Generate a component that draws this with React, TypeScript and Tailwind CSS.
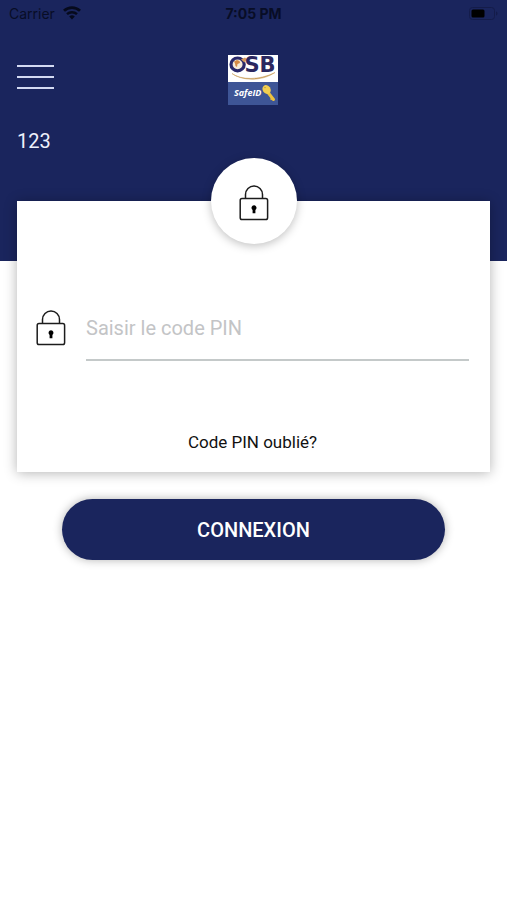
import React, { useState } from 'react';

const LockIcon = () => (
  <svg width="30" height="36" viewBox="0 0 30 36" fill="none" stroke="#1c1c1c" strokeWidth="1.5" aria-hidden="true">
    <path d="M6.5 13.5V9.5a8.5 8.5 0 0 1 17 0v4" />
    <rect x="1.2" y="13.6" width="27.4" height="21" rx="1.8" />
    <path
      d="M15 20.2a2.6 2.6 0 0 0-1.4 4.7v3.4h2.8v-3.4a2.6 2.6 0 0 0-1.4-4.7z"
      fill="#000"
      stroke="none"
    />
  </svg>
);

const WifiIcon = () => (
  <svg width="18" height="14" viewBox="0 0 18 14" fill="none" stroke="#060a1c" aria-label="Wi-Fi">
    <path d="M1 4.8a11.6 11.6 0 0 1 16 0" strokeWidth="2.8" />
    <path d="M4 8.2a7.2 7.2 0 0 1 10 0" strokeWidth="2.4" />
    <path d="M9 13.4 6.2 10.6a4 4 0 0 1 5.6 0z" fill="#060a1c" stroke="none" />
  </svg>
);

const BatteryIcon = () => (
  <svg width="29" height="13" viewBox="0 0 29 13" aria-label="Battery">
    <rect x=".5" y=".5" width="25" height="12" rx="3" fill="none" stroke="#141c4a" />
    <rect x="2.5" y="2.5" width="13" height="8" rx="1.5" fill="#000" />
    <path d="M27 4.5c2 .6 2 3.4 0 4z" fill="#141c4a" />
  </svg>
);

const Logo = () => (
  <svg width="50" height="50" viewBox="0 0 50 50" className="overflow-visible" role="img" aria-label="OSB SafeID">
    <rect width="50" height="50" fill="#fff" />
    <rect y="27" width="50" height="23" fill="#3e5596" />
    <ellipse cx="9.6" cy="9.4" rx="6.6" ry="6.4" fill="#f7ead9" stroke="#29286b" strokeWidth="3.2" />
    <path d="M6 6.5l3-1.5 2.5 1 .5 2-2.5 1-.5 3-1.5-1-.5-2.500z" fill="#d58a45" />
    <path d="M13 4.500l4-2 2 2-2.500 3z" fill="#d59a5c" />
    <text
      x="16.500"
      y="17"
      fill="#2b2860"
      fontFamily="'DejaVu Sans', sans-serif"
      fontWeight="700"
      fontSize="21"
    >
      SB
    </text>
    <path d="M4 18.500c9 6.500 27 7 43-1-14 9.500-34 8-43 1z" fill="#c79a55" stroke="#c79a55" strokeWidth=".5" />
    <text
      x="6"
      y="41"
      fill="#fff"
      fontFamily="'Open Sans', sans-serif"
      fontWeight="700"
      fontStyle="italic"
      fontSize="9"
    >
      SafeID
    </text>
    <path d="M40 37.500l5.500 7" stroke="#edc23e" strokeWidth="3" strokeLinecap="round" />
    <path d="M42.500 44.500l2.500-1.500" stroke="#edc23e" strokeWidth="1.8" />
    <ellipse cx="38.600" cy="34.500" rx="3.900" ry="4.700" transform="rotate(-35 38.600 34.500)" fill="#f3ce50" />
    <circle cx="37" cy="32.600" r=".7" fill="#a08d46" />
  </svg>
);

const StatusBar = () => (
  <div className="grid h-[26px] grid-cols-3 items-center px-[9px] font-['Inter',sans-serif] text-[14px] text-[#080d26]">
    <div className="flex items-center gap-2">
      <span>Carrier</span>
      <WifiIcon />
    </div>
    <span className="text-center font-bold">7:05 PM</span>
    <div className="flex justify-end">
      <BatteryIcon />
    </div>
  </div>
);

export default function App() {
  const [pin, setPin] = useState('');

  return (
    <div className="min-h-screen bg-white font-['Roboto',sans-serif]">
      <header className="bg-[#1a255d] pb-[108px]">
        <StatusBar />

        <div className="mt-[29px] grid grid-cols-3 items-start px-[17px]">
          <button type="button" aria-label="Menu" className="flex w-[37px] flex-col gap-[9px] py-2.5">
            <span className="h-[2px] w-full bg-[#d3daf2]" />
            <span className="h-[2px] w-full bg-[#d3daf2]" />
            <span className="h-[2px] w-full bg-[#d3daf2]" />
          </button>
          <div className="flex justify-center">
            <Logo />
          </div>
        </div>

        <p className="mt-6 px-[17px] text-[20px] leading-6 text-[#eef1fb]">123</p>
      </header>

      <main className="-mt-[60px] px-[17px]">
        <form onSubmit={e => e.preventDefault()}>
          {/* PIN card */}
          <div className="relative bg-white pt-[105px] pr-[21px] pb-[17px] pl-[19px] shadow-[0_1px_12px_rgba(0,0,0,0.3)]">
            <div className="absolute -top-[43px] left-1/2 flex size-[86px] -translate-x-1/2 items-center justify-center rounded-full bg-white pt-1 shadow-[0_2px_10px_rgba(0,0,0,0.25)]">
              <LockIcon />
            </div>

            <div className="flex items-start gap-5">
              <label htmlFor="pin" aria-label="Code PIN" className="mt-1">
                <LockIcon />
              </label>
              <input
                id="pin"
                type="password"
                inputMode="numeric"
                placeholder="Saisir le code PIN"
                value={pin}
                onChange={e => setPin(e.target.value)}
                className="h-[55px] min-w-0 flex-1 border-b-2 border-[#c4c9c9] pb-2.5 text-[20px] text-black outline-none placeholder:text-[#c3c4c6]"
              />
            </div>

            <div className="mt-[69px] text-center">
              <a href="#" className="text-[17px] leading-6 text-[#111]">
                Code PIN oublié?
              </a>
            </div>
          </div>

          <div className="mt-[27px] px-[45px]">
            <button
              type="submit"
              className="h-[61px] w-full rounded-full bg-[#1a255d] text-[20px] font-medium text-white shadow-[0_0_10px_rgba(0,0,0,0.3)]"
            >
              CONNEXION
            </button>
          </div>
        </form>
      </main>
    </div>
  );
}
